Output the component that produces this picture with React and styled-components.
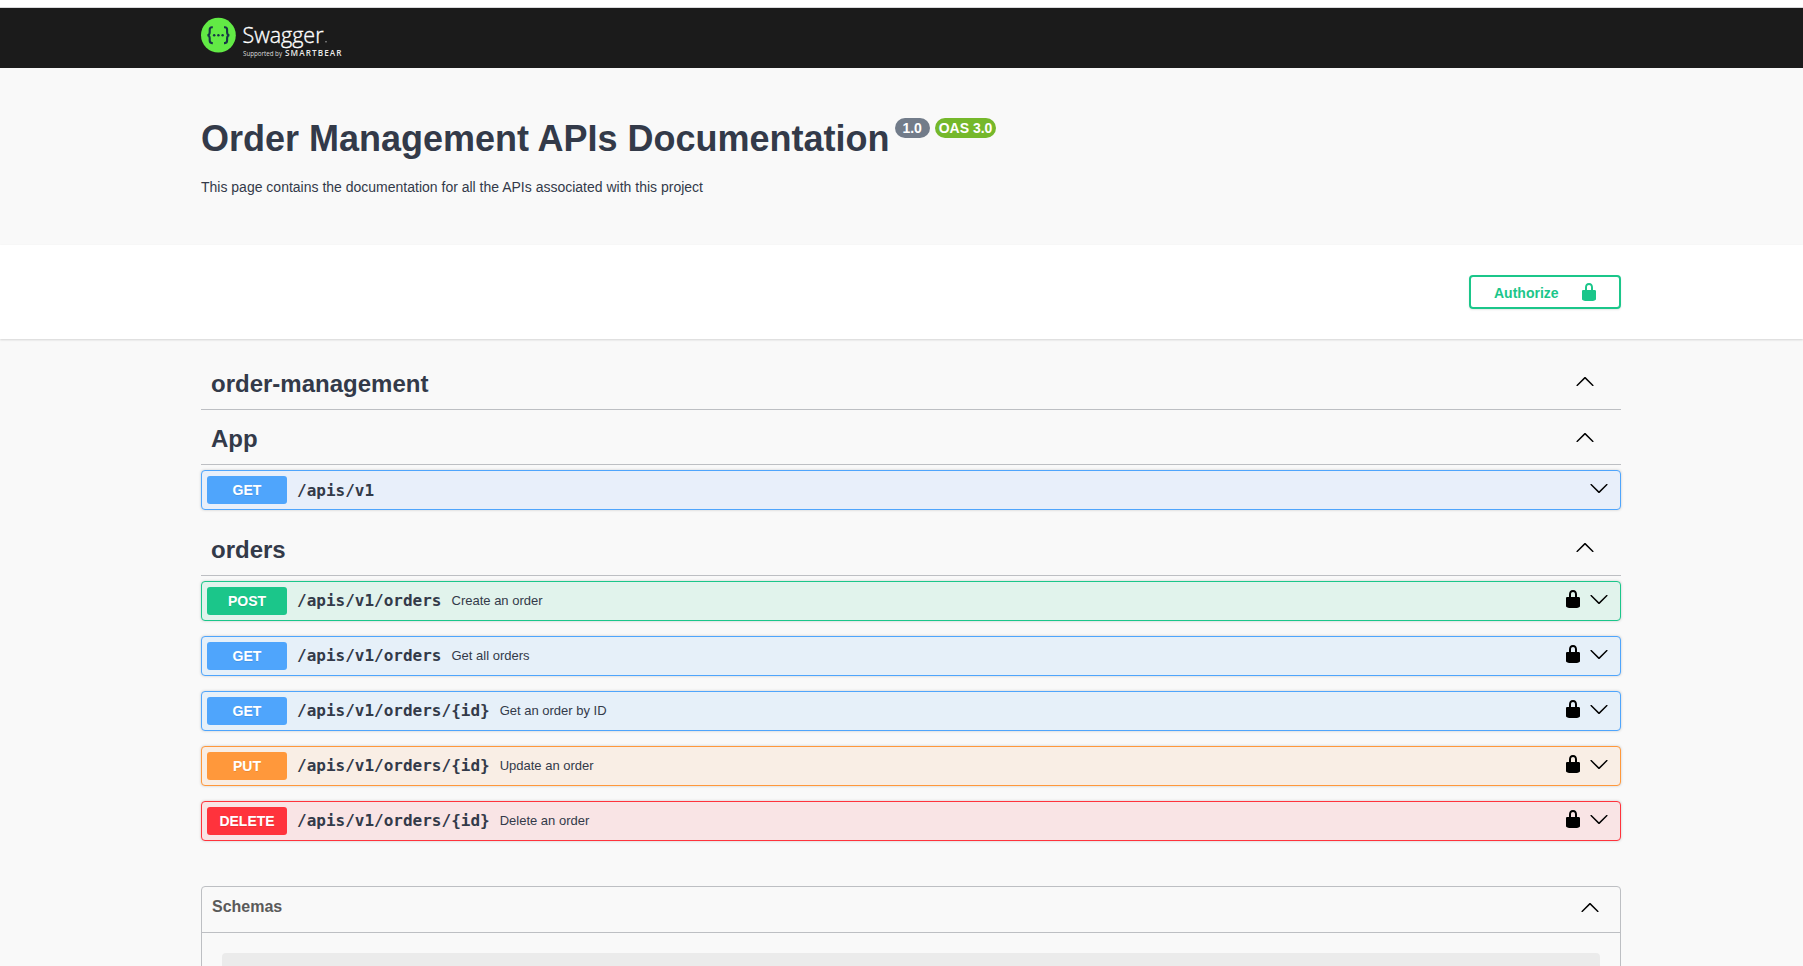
import React from "react";
import styled, { createGlobalStyle } from "styled-components";

const GlobalStyle = createGlobalStyle`
  *, *::before, *::after { box-sizing: border-box; }
  html, body { height: 100%; }
  body {
    margin: 0;
    overflow: hidden;
    background: #f9f9f9;
    color: #333a49;
    font-family: "Liberation Sans", Arial, sans-serif;
  }
  #root { height: 100%; overflow: hidden; }
  h1, h2, h3, p { margin: 0; }
  button { font: inherit; color: inherit; background: none; border: 0; padding: 0; cursor: pointer; }
  svg { display: block; flex: none; }
`;

const TopStrip = styled.div`
  height: 8px;
  background: #fff;
  border-bottom: 1px solid #d9d9db;
`;

const Wrapper = styled.div`
  width: 1420px;
  margin-left: 201px;
`;

const TopBar = styled.header`
  height: 60px;
  background: #1b1b1b;
`;

const Info = styled.section`
  height: 177px;
  padding-top: 50px;
`;

const TitleRow = styled.div`
  display: flex;
  align-items: flex-start;
  height: 41px;
`;

const Title = styled.h1`
  font-size: 36px;
  line-height: 41px;
  font-weight: 700;
  letter-spacing: -0.01px;
  white-space: nowrap;
`;

const Badge = styled.span`
  height: 20px;
  margin-left: ${(p) => p.$gap}px;
  padding: 0 ${(p) => p.$pad}px;
  border-radius: 10px;
  background: ${(p) => p.$color};
  color: #fff;
  font-size: 14px;
  font-weight: 700;
  line-height: 20px;
  white-space: nowrap;
`;

const Description = styled.p`
  margin-top: 20px;
  font-size: 14px;
  line-height: 16px;
`;

const SchemeBar = styled.section`
  height: 94px;
  padding: 30px 0;
  background: #fff;
  box-shadow: 0 1px 2px rgba(0, 0, 0, 0.15);
`;

const SchemeContent = styled(Wrapper)`
  display: flex;
  justify-content: flex-end;
`;

const AuthorizeButton = styled.button`
  display: flex;
  align-items: center;
  justify-content: space-between;
  width: 152px;
  height: 34px;
  padding: 0 20px 0 23px;
  border: 2px solid #1bc68a;
  border-radius: 4px;
  box-shadow: 0 1px 2px rgba(0, 0, 0, 0.1);
  color: #1bc68a;
  font-size: 14px;
  font-weight: 700;
  line-height: 16px;

  span { padding-top: 2px; }
`;

const Operations = styled(Wrapper)`
  padding-top: 21px;
`;

const TagHeader = styled.button`
  display: flex;
  align-items: center;
  justify-content: space-between;
  width: 100%;
  height: ${(p) => p.$height || 50}px;
  margin-bottom: 5px;
  padding: 0 26px 0 10px;
  border-bottom: 1px solid #bdbfc3;

  h3 { font-size: 24px; line-height: 28px; padding-bottom: ${(p) => p.$raise ?? 2}px; }
  svg { margin-bottom: ${(p) => p.$lift ?? 8}px; }
`;

const methodColors = {
  GET: { main: "#4fa5fc", tint: "#e6f0f9" },
  POST: { main: "#1bc68a", tint: "#e1f3ec" },
  PUT: { main: "#ff983b", tint: "#f9eee5" },
  DELETE: { main: "#ff333c", tint: "#f9e4e5" },
};

const Operation = styled.div`
  display: flex;
  align-items: center;
  height: 40px;
  margin-bottom: 15px;
  padding: 5px 11px 5px 5px;
  border: 1px solid ${(p) => methodColors[p.$method].main};
  border-radius: 4px;
  background: ${(p) => p.$tint || methodColors[p.$method].tint};
  box-shadow: 0 0 3px rgba(0, 0, 0, 0.19);
`;

const Method = styled.span`
  width: 80px;
  height: 28px;
  border-radius: 3px;
  background: ${(p) => methodColors[p.$method].main};
  color: #fff;
  font-size: 14px;
  font-weight: 700;
  line-height: 28px;
  text-align: center;
  text-shadow: 0 1px 0 rgba(0, 0, 0, 0.1);
`;

const Path = styled.span`
  margin-left: 10px;
  padding-top: ${(p) => (p.$alone ? 2 : 0)}px;
  font-family: "DejaVu Sans Mono", monospace;
  font-size: 16px;
  font-weight: 700;
  line-height: 20px;
`;

const Summary = styled.span`
  margin-left: 10px;
  font-size: 13px;
  line-height: 16px;
`;

const RowIcons = styled.span`
  display: flex;
  gap: 6px;
  margin: 0 0 4px auto;
  color: #000;
`;

const Schemas = styled.section`
  height: 200px;
  margin-top: 45px;
  border: 1px solid #bdbfc3;
  border-radius: 4px;
`;

const SchemasHeader = styled.button`
  display: flex;
  justify-content: space-between;
  width: 100%;
  height: 46px;
  padding: 10px 20px 0 10px;
  border-bottom: 1px solid #bdbfc3;

  h2 { color: #5a5a5a; font-size: 16px; line-height: 20px; }
`;

const SchemaCard = styled.div`
  height: 60px;
  margin: 20px;
  border-radius: 4px;
  background: #ebebeb;
`;

const Lock = () => (
  <svg width="20" height="20" viewBox="0 0 20 20" fill="currentColor">
    <path d="M15.8 8H14V5.6C14 2.703 12.665 1 10 1 7.334 1 6 2.703 6 5.6V8H4c-.553 0-1 .646-1 1.199V17c0 .549.428 1.139.951 1.307l1.197.387C5.672 18.861 6.55 19 7.1 19h5.8c.549 0 1.428-.139 1.951-.307l1.196-.387c.524-.167.953-.757.953-1.306V9.199C17 8.646 16.352 8 15.8 8zM12 8H8V5.199C8 3.754 8.797 3 10 3c1.203 0 2 .754 2 2.199V8z" />
  </svg>
);

const ArrowDown = () => (
  <svg width="20" height="20" viewBox="0 0 20 20">
    <path d="M17.418 6.109c.272-.268.709-.268.979 0s.271.701 0 .969l-7.908 7.83c-.27.268-.707.268-.979 0l-7.908-7.83c-.27-.268-.27-.701 0-.969.271-.268.709-.268.979 0L10 13.25l7.418-7.141z" />
  </svg>
);

const ArrowUp = () => (
  <svg width="20" height="20" viewBox="0 0 20 20">
    <path d="M17.418 14.908c.272.268.709.268.979 0s.271-.701 0-.969l-7.908-7.83c-.27-.268-.707-.268-.979 0l-7.908 7.83c-.27.268-.27.701 0 .969.271.268.709.268.979 0L10 7.767l7.418 7.141z" />
  </svg>
);

const Logo = () => (
  <svg width="150" height="60" viewBox="0 0 150 60" fill="none">
    <circle cx="17.4" cy="27.2" r="17.4" fill="#62ea45" />
    <g stroke="#173647" strokeWidth="2.1">
      <path d="M11.8 19.3h-.8c-1.7 0-2.3.9-2.3 2.5v2.4c0 1.8-.6 2.8-2.2 3 1.6.2 2.2 1.2 2.2 3v2.4c0 1.6.6 2.5 2.3 2.5h.8" />
      <path d="M23 19.3h.8c1.7 0 2.3.9 2.3 2.5v2.4c0 1.8.6 2.8 2.2 3-1.6.2-2.2 1.2-2.2 3v2.4c0 1.6-.6 2.5-2.3 2.5H23" />
    </g>
    <g fill="#173647">
      <circle cx="13.2" cy="27.2" r="1.25" />
      <circle cx="17.4" cy="27.2" r="1.25" />
      <circle cx="21.6" cy="27.2" r="1.25" />
    </g>
    <g fill="#fff">
      <text x="41.5" y="34.6" fontFamily='"Open Sans", sans-serif' fontSize="22" fontWeight="300" stroke="#fff" strokeWidth=".35" textLength="81" lengthAdjust="spacingAndGlyphs">Swagger</text>
      <text x="42" y="48" fontFamily='"Open Sans", sans-serif' fontSize="6.2" fillOpacity=".85" textLength="39" lengthAdjust="spacingAndGlyphs">Supported by</text>
      <text x="84" y="48" fontFamily='"Open Sans", sans-serif' fontSize="8.2" fontWeight="600" fillOpacity=".92" textLength="56.5">SMARTBEAR</text>
      <rect x="124" y="33.3" width="2" height="1" fillOpacity=".5" />
    </g>
  </svg>
);

const orders = [
  { method: "POST", path: "/apis/v1/orders", summary: "Create an order" },
  { method: "GET", path: "/apis/v1/orders", summary: "Get all orders" },
  { method: "GET", path: "/apis/v1/orders/{id}", summary: "Get an order by ID" },
  { method: "PUT", path: "/apis/v1/orders/{id}", summary: "Update an order" },
  { method: "DELETE", path: "/apis/v1/orders/{id}", summary: "Delete an order" },
];

function OperationRow({ method, path, summary, tint }) {
  return (
    <Operation $method={method} $tint={tint}>
      <Method $method={method}>{method}</Method>
      <Path $alone={!summary}>{path}</Path>
      {summary && <Summary>{summary}</Summary>}
      <RowIcons>
        {summary && <Lock />}
        <ArrowDown />
      </RowIcons>
    </Operation>
  );
}

export default function App() {
  return (
    <>
      <GlobalStyle />
      <TopStrip />
      <TopBar>
        <Wrapper><Logo /></Wrapper>
      </TopBar>
      <Info>
        <Wrapper>
          <TitleRow>
            <Title>Order Management APIs Documentation</Title>
            <Badge $color="#727c8a" $gap={5.2} $pad={7.8}>1.0</Badge>
            <Badge $color="#75b82b" $gap={5} $pad={4}>OAS 3.0</Badge>
          </TitleRow>
          <Description>This page contains the documentation for all the APIs associated with this project</Description>
        </Wrapper>
      </Info>
      <SchemeBar>
        <SchemeContent>
          <AuthorizeButton><span>Authorize</span><Lock /></AuthorizeButton>
        </SchemeContent>
      </SchemeBar>
      <Operations as="main">
        <TagHeader><h3>order-management</h3><ArrowUp /></TagHeader>
        <TagHeader $lift={6}><h3>App</h3><ArrowUp /></TagHeader>
        <OperationRow method="GET" path="/apis/v1" tint="#e8effa" />
        <TagHeader $height={51} $raise={0} $lift={6}><h3>orders</h3><ArrowUp /></TagHeader>
        {orders.map((o) => (
          <OperationRow key={o.method + o.path} {...o} />
        ))}
        <Schemas>
          <SchemasHeader><h2>Schemas</h2><ArrowUp /></SchemasHeader>
          <SchemaCard />
        </Schemas>
      </Operations>
    </>
  );
}
